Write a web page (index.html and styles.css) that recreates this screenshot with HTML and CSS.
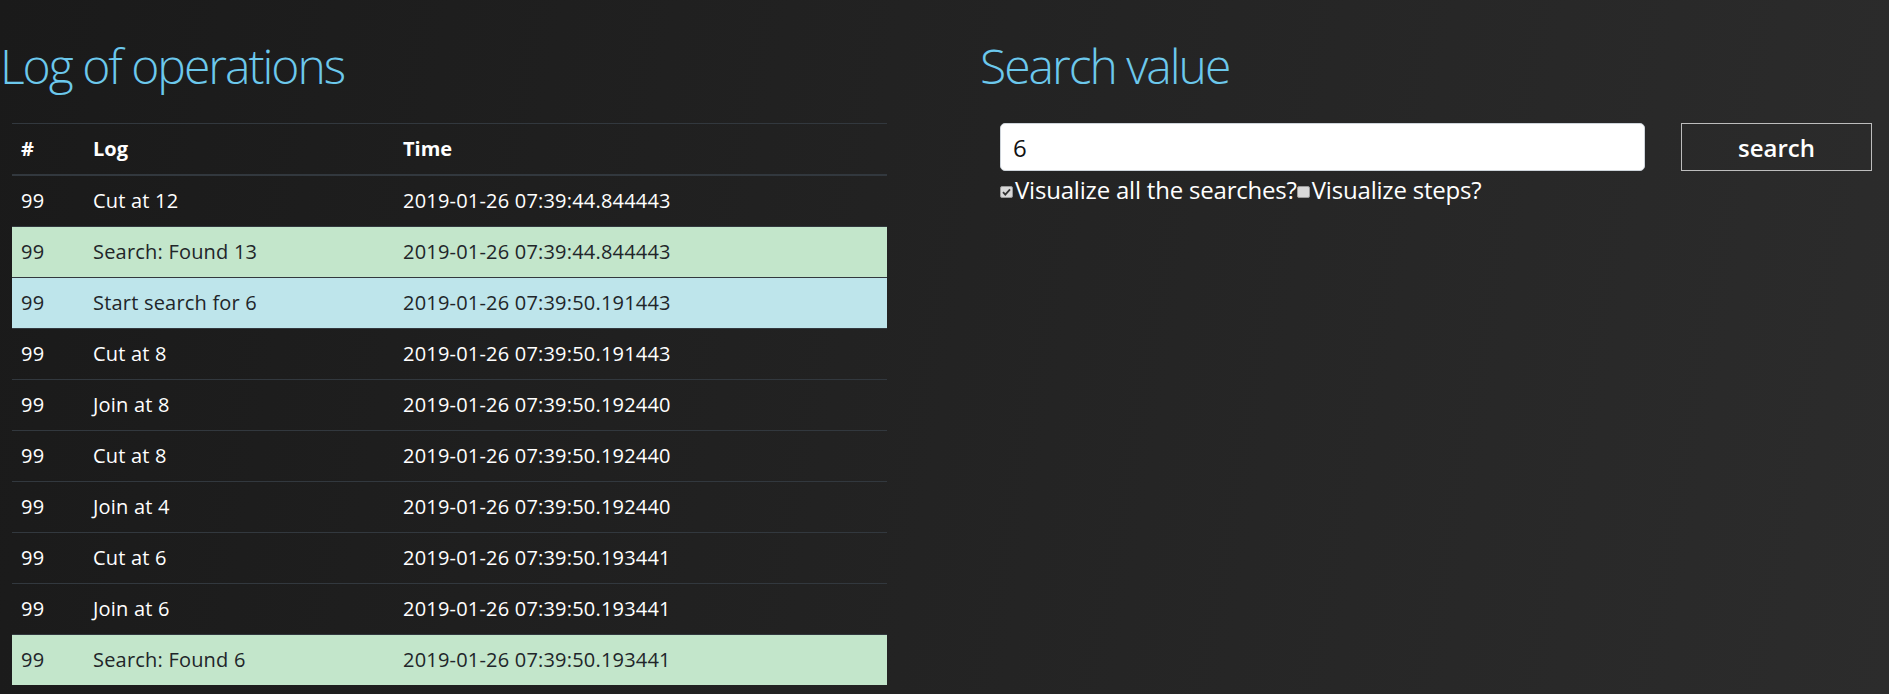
FILE: index.html
```html
<!DOCTYPE html>
<html lang="en">
<head>
<meta charset="utf-8">
<title>Log of operations</title>
<link rel="stylesheet" href="styles.css">
</head>
<body>
<div class="page">
  <section class="col col-log">
    <h1 class="title title-log">Log of operations</h1>
    <table class="log-table">
      <thead>
        <tr><th class="c-num">#</th><th class="c-log">Log</th><th class="c-time">Time</th></tr>
      </thead>
      <tbody>
        <tr><td>99</td><td>Cut at 12</td><td>2019-01-26 07:39:44.844443</td></tr>
        <tr class="row-success"><td>99</td><td>Search: Found 13</td><td>2019-01-26 07:39:44.844443</td></tr>
        <tr class="row-info"><td>99</td><td>Start search for 6</td><td>2019-01-26 07:39:50.191443</td></tr>
        <tr><td>99</td><td>Cut at 8</td><td>2019-01-26 07:39:50.191443</td></tr>
        <tr><td>99</td><td>Join at 8</td><td>2019-01-26 07:39:50.192440</td></tr>
        <tr><td>99</td><td>Cut at 8</td><td>2019-01-26 07:39:50.192440</td></tr>
        <tr><td>99</td><td>Join at 4</td><td>2019-01-26 07:39:50.192440</td></tr>
        <tr><td>99</td><td>Cut at 6</td><td>2019-01-26 07:39:50.193441</td></tr>
        <tr><td>99</td><td>Join at 6</td><td>2019-01-26 07:39:50.193441</td></tr>
        <tr class="row-success"><td>99</td><td>Search: Found 6</td><td>2019-01-26 07:39:50.193441</td></tr>
      </tbody>
    </table>
  </section>
  <section class="col col-search">
    <h1 class="title title-search">Search value</h1>
    <div class="search-form">
      <div class="search-row">
        <input class="search-input" type="text" value="6">
        <button class="search-btn" type="button">search</button>
      </div>
      <div class="options">
        <label class="opt"><span class="box checked"><svg viewBox="0 0 13 12" width="13" height="12"><path d="M3 6.2 L5.3 8.6 L10 3.4" fill="none" stroke="#333" stroke-width="1.8"/></svg></span>Visualize all the searches?</label>
        <label class="opt"><span class="box"></span>Visualize steps?</label>
      </div>
    </div>
  </section>
</div>
</body>
</html>
```

FILE: styles.css
```css
html, body {
  margin: 0;
  padding: 0;
}
body {
  width: 1889px;
  height: 694px;
  overflow: hidden;
  background: linear-gradient(100deg, #1a1a1a 0%, #222222 45%, #2c2c2c 100%);
  font-family: "Open Sans", "Noto Sans", sans-serif;
  font-size: 20px;
  line-height: 30px;
  color: #ffffff;
}
.page {
  display: flex;
}
.col {
  display: flex;
  flex-direction: column;
}
.col-log {
  width: 944px;
}
.col-search {
  flex: 1;
}
.title {
  font-family: "Open Sans", "Noto Sans", sans-serif;
  font-weight: 300;
  font-size: 48px;
  line-height: 60px;
  color: #6cc8ec;
  margin: 36px 0 27px 0;
  letter-spacing: -2px;
}
.title-log {
  margin-left: 0;
}
.title-search {
  margin-left: 36px;
}
.log-table {
  margin-left: 12px;
  width: 875px;
  border-collapse: collapse;
}
.log-table th,
.log-table td {
  text-align: left;
  padding: 10px 9px;
  border-top: 1px solid #32383e;
  vertical-align: top;
}
.log-table td {
  letter-spacing: 0.2px;
}
.log-table th {
  font-weight: 700;
  border-bottom: 2px solid #32383e;
}
.c-num { width: 54px; }
.c-log { width: 292px; }
.row-success td {
  background: #c3e6cb;
  color: #212529;
}
.row-info td {
  background: #bee5eb;
  color: #212529;
}
.search-form {
  margin-left: 56px;
  display: flex;
  flex-direction: column;
}
.search-row {
  display: flex;
  gap: 36px;
}
.search-input {
  box-sizing: border-box;
  width: 645px;
  height: 48px;
  padding: 6px 12px;
  border: 1px solid #ced4da;
  border-radius: 5px;
  background: #ffffff;
  color: #111111;
  font-family: "Open Sans", "Noto Sans", sans-serif;
  font-size: 24px;
  outline: none;
}
.search-btn {
  box-sizing: border-box;
  width: 191px;
  height: 48px;
  background: transparent;
  border: 1px solid #bdbdbd;
  color: #ffffff;
  font-family: "Open Sans", "Noto Sans", sans-serif;
  font-weight: 600;
  font-size: 24px;
  padding: 0;
}
.options {
  display: flex;
  margin-top: 4px;
  font-size: 24px;
  line-height: 30px;
  letter-spacing: -0.2px;
}
.opt {
  display: flex;
  align-items: center;
}
.box {
  box-sizing: border-box;
  width: 13px;
  height: 12px;
  margin: 4px 2px 0 0;
  background: #d8d8d8;
  border: 1px solid #9a9a9a;
  border-radius: 2px;
  display: flex;
}
.box svg {
  display: block;
  margin: -1px;
}
```
